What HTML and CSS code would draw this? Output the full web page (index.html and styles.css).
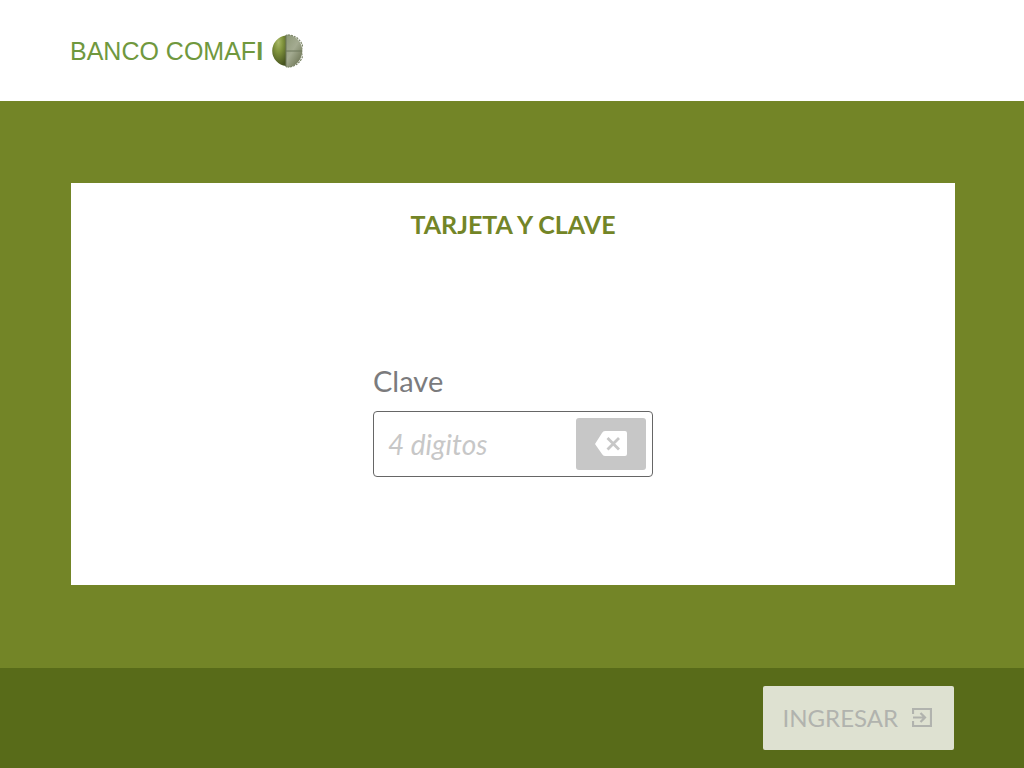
FILE: index.html
```html
<!DOCTYPE html>
<html lang="es">
<head>
<meta charset="utf-8">
<meta name="viewport" content="width=device-width, initial-scale=1">
<title>Banco Comafi</title>
<link rel="stylesheet" href="styles.css">
</head>
<body>
<header class="header">
  <div class="logo">
    <span class="logo-text">BANCO COMAF<b>I</b></span>
    <svg class="logo-mark" viewBox="0 0 32 34" aria-hidden="true">
      <defs>
        <radialGradient id="globe" cx=".45" cy=".22" r=".8">
          <stop offset="0" stop-color="#a8b866"/>
          <stop offset=".4" stop-color="#81943d"/>
          <stop offset="1" stop-color="#46531f"/>
        </radialGradient>
        <linearGradient id="shade" x1="0" y1="0" x2=".8" y2="1">
          <stop offset="0" stop-color="#8c9776"/>
          <stop offset=".5" stop-color="#a4ab91"/>
          <stop offset="1" stop-color="#68704f"/>
        </linearGradient>
      </defs>
      <path d="M15 1.500A15 15.300 0 0 0 15 32Z" fill="url(#globe)"/>
      <path d="M15 .5A16.300 16.500 0 0 1 15 33.500Z" fill="url(#shade)"/>
      <path d="M17 1A15.500 16 0 0 1 17 33" fill="none" stroke="#7d8669" stroke-width="1.200" stroke-dasharray="2 1"/>
      <path d="M15 17H31M15 1V33" fill="none" stroke="#6c775b" stroke-width="1"/>
    </svg>
  </div>
</header>
<form class="screen">
  <main class="content">
    <section class="card">
      <h1 class="title">TARJETA Y CLAVE</h1>
      <div class="field">
        <label class="label" for="clave">Clave</label>
        <div class="control">
          <input class="input" id="clave" type="password" maxlength="4" inputmode="numeric" placeholder="4 digitos">
          <button class="erase" type="button" aria-label="Borrar">
            <svg class="erase-icon" viewBox="0 0 32 26" aria-hidden="true">
              <path d="M10 0H30Q32 0 32 2V23Q32 25 30 25H10Q8 25 7 23L0 13L7 2Q8 0 10 0Z" fill="#fff"/>
              <path d="M12.500 7L24 18.500M24 7L12.500 18.500" fill="none" stroke="#c7c7c7" stroke-width="2.800"/>
            </svg>
          </button>
        </div>
      </div>
    </section>
  </main>
  <footer class="footer">
    <button class="submit" type="submit" disabled>
      <span>INGRESAR</span>
      <svg class="submit-icon" viewBox="0 0 20 20" aria-hidden="true">
        <path d="M1 6V1H19V18H1V13M1 9.500H13M8.500 5L13 9.500L8.500 14" fill="none" stroke="currentColor" stroke-width="2.200"/>
      </svg>
    </button>
  </footer>
</form>
</body>
</html>
```
FILE: styles.css
```css
* { box-sizing: border-box; }

body {
  display: flex;
  flex-direction: column;
  min-height: 100vh;
  margin: 0;
  background: #738527;
  font-family: Lato, sans-serif;
}

.header {
  display: flex;
  align-items: center;
  min-height: 101px;
  padding: 0 70px;
  background: #fff;
}

.logo {
  display: flex;
  align-items: center;
  gap: 8px;
}

.logo-text {
  color: #70983e;
  font: 25px/32px "Liberation Sans", Arial, sans-serif;
}

.logo-mark {
  width: 32px;
  height: 34px;
}

.screen {
  display: flex;
  flex: 1;
  flex-direction: column;
}

.content {
  display: flex;
  flex: 1;
  padding: 82px 69px 83px 71px;
}

.card {
  display: flex;
  flex: 1;
  flex-direction: column;
  align-items: center;
  padding: 27px 24px 108px;
  background: #fff;
}

.title {
  margin: 0;
  color: #738527;
  font-size: 25px;
  font-weight: 700;
  line-height: 28px;
}

.field {
  display: flex;
  flex-direction: column;
  gap: 12px;
  width: 280px;
  max-width: 100%;
  margin-top: auto;
}

.label {
  color: #7b7b7d;
  font-size: 29px;
  line-height: 36px;
}

.control {
  display: flex;
  padding: 6px;
  border: 1px solid #666;
  border-radius: 4px;
  background: #fff;
}

.input {
  flex: 1;
  min-width: 0;
  padding: 0 8px;
  border: 0;
  outline: 0;
  background: transparent;
  color: #7b7b7d;
  font: 28px/34px Lato, sans-serif;
}

.input::placeholder {
  color: #c7c7c7;
  font-style: italic;
  opacity: 1;
}

.erase {
  display: flex;
  align-items: center;
  justify-content: center;
  width: 70px;
  height: 52px;
  padding: 0;
  border: 0;
  border-radius: 3px;
  background: #c7c7c7;
}

.erase-icon {
  width: 32px;
  height: 26px;
}

.footer {
  display: flex;
  align-items: center;
  justify-content: flex-end;
  min-height: 100px;
  padding: 0 70px;
  background: #586b19;
}

.submit {
  display: flex;
  align-items: center;
  gap: 14px;
  min-height: 64px;
  padding: 0 22px 0 20px;
  border: 0;
  border-radius: 2px;
  background: #dee1d1;
  color: #b1b3ae;
  font: 24px/28px Lato, sans-serif;
}

.submit-icon {
  width: 20px;
  height: 20px;
}
```
